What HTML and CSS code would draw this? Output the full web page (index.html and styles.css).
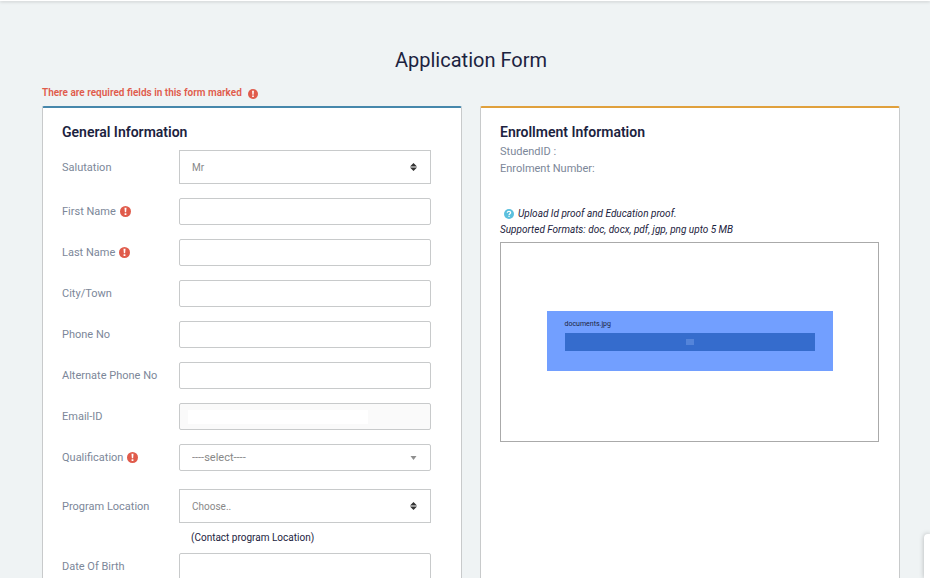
FILE: index.html
```html
<!DOCTYPE html>
<html lang="en">
<head>
  <meta charset="UTF-8">
  <meta name="viewport" content="width=device-width, initial-scale=1.0">
  <title>Application Form</title>
  <link rel="stylesheet" href="styles.css">
</head>
<body>
<svg class="sprite" aria-hidden="true">
  <symbol id="icon-required" viewBox="0 0 12 12">
    <circle cx="6" cy="6" r="6" fill="#e05b4b"/>
    <path d="M4.900 2h2.200l-.4 4.900H5.300z M5 7.800h2v1.900H5z" fill="#fff"/>
  </symbol>
  <symbol id="icon-help" viewBox="0 0 12 12">
    <circle cx="6" cy="6" r="6" fill="#5bc0de"/>
    <path d="M4 4.600C4 3.300 4.900 2.700 6 2.700s2 .7 2 1.700c0 1.300-1.800 1.400-1.900 2.900" fill="none" stroke="#fff" stroke-width="1.500"/>
    <path d="M5.300 8.200h1.500v1.500H5.300z" fill="#fff"/>
  </symbol>
  <symbol id="icon-sort" viewBox="0 0 7 8">
    <path d="M3.500 0L7 3.500H0z M0 4.500h7L3.500 8z" fill="#333"/>
  </symbol>
  <symbol id="icon-down" viewBox="0 0 7 8">
    <path d="M.5 2h6L3.500 6z" fill="#8f8f8f"/>
  </symbol>
</svg>

<header class="topbar"></header>

<main class="page">
  <h1>Application Form</h1>
  <p class="required-note">There are required fields in this form marked <svg class="icon-small"><use href="#icon-required"/></svg></p>

  <div class="panels">
    <form class="panel panel-general">
      <h2>General Information</h2>

      <div class="row">
        <label for="salutation">Salutation</label>
        <div class="select-box">
          <select id="salutation" class="tall"><option>Mr</option><option>Mrs</option><option>Ms</option></select>
          <svg><use href="#icon-sort"/></svg>
        </div>
      </div>
      <div class="row">
        <label for="firstName">First Name <svg class="icon"><use href="#icon-required"/></svg></label>
        <input type="text" id="firstName" required>
      </div>
      <div class="row">
        <label for="lastName">Last Name <svg class="icon"><use href="#icon-required"/></svg></label>
        <input type="text" id="lastName" required>
      </div>
      <div class="row">
        <label for="city">City/Town</label>
        <input type="text" id="city">
      </div>
      <div class="row">
        <label for="phone">Phone No</label>
        <input type="tel" id="phone">
      </div>
      <div class="row">
        <label for="altPhone">Alternate Phone No</label>
        <input type="tel" id="altPhone">
      </div>
      <div class="row">
        <label for="email">Email-ID</label>
        <input type="email" id="email" readonly>
      </div>
      <div class="row">
        <label for="qualification">Qualification <svg class="icon"><use href="#icon-required"/></svg></label>
        <div class="select-box">
          <select id="qualification" required><option>----select----</option></select>
          <svg><use href="#icon-down"/></svg>
        </div>
      </div>
      <div class="row row-location">
        <label for="location">Program Location</label>
        <div class="select-box">
          <select id="location" class="tall"><option>Choose..</option></select>
          <svg><use href="#icon-sort"/></svg>
        </div>
        <p class="hint">(Contact program Location)</p>
      </div>
      <div class="row">
        <label for="dob">Date Of Birth</label>
        <input type="text" id="dob">
      </div>
    </form>

    <section class="panel panel-enrollment">
      <h2>Enrollment Information</h2>
      <p class="info">StudendID :</p>
      <p class="info">Enrolment Number:</p>

      <div class="upload-help">
        <p><svg class="icon-small"><use href="#icon-help"/></svg>Upload Id proof and Education proof.</p>
        <p>Supported Formats: doc, docx, pdf, jgp, png upto 5 MB</p>
      </div>
      <div class="dropzone">
        <div class="file">
          <span class="file-name">documents.jpg</span>
          <div class="file-bar"><span></span></div>
        </div>
      </div>
    </section>
  </div>
</main>

<aside class="side-tab"></aside>
</body>
</html>
```

FILE: styles.css
```css
* { box-sizing: border-box; }
body {
  margin: 0;
  background: #eff3f4;
  color: #1c2340;
  font-family: Roboto, Arial, sans-serif;
  font-size: 11px;
}
h1, h2, p { margin: 0; }
.sprite { position: absolute; width: 0; height: 0; }

.topbar {
  height: 1px;
  background: #fff;
  box-shadow: 0 1px 3px rgba(0,0,0,0.25);
}

.page { padding: 47px 30px 0 42px; }
h1 {
  font-size: 20px;
  line-height: 24px;
  font-weight: 400;
  text-align: center;
}
.required-note {
  display: flex;
  align-items: center;
  gap: 6px;
  margin: 13px 0 5px;
  color: #e05b4b;
  font-size: 10px;
  line-height: 16px;
  font-weight: 600;
}
.icon { width: 11px; height: 11px; margin-left: 4px; }
.icon-small { width: 10px; height: 10px; }
.required-note .icon-small { margin-top: 2px; }

.panels {
  display: grid;
  grid-template-columns: 1fr 1fr;
  gap: 18px;
}
.panel {
  background: #fff;
  border: 1px solid #c8cacb;
  border-top: 2px solid #4687ab;
  border-radius: 2px 2px 0 0;
  padding: 14px 30px 20px 19px;
}
.panel-enrollment {
  border-top-color: #e0a03c;
  padding-right: 20px;
}
h2 {
  font-size: 14px;
  line-height: 20px;
  font-weight: 600;
}
.panel-general h2 { margin-bottom: 8px; }
.panel-enrollment h2 { margin-bottom: 1px; }

.row {
  display: grid;
  grid-template-columns: 117px 1fr;
  align-items: center;
  margin-bottom: 14px;
}
.row label {
  display: flex;
  align-items: center;
  color: #7c8799;
}
input, select {
  display: block;
  width: 100%;
  height: 27px;
  padding: 0 12px;
  border: 1px solid #c8cacb;
  border-radius: 2px;
  background: #fff;
  color: #888;
  font: inherit;
  appearance: none;
}
.tall { height: 34px; border-radius: 0; font-size: 10px; }
input:read-only {
  background: #fafafa linear-gradient(#fff, #fff) 8px 6px / 180px 14px no-repeat;
}
.select-box { position: relative; }
.select-box svg {
  position: absolute;
  top: calc(50% - 4px);
  right: 14px;
  width: 7px;
  height: 8px;
  pointer-events: none;
}
.row-location { margin: 18px 0 8px; }
.hint {
  grid-column: 2;
  margin-top: 8px;
  padding-left: 12px;
  font-size: 10px;
  line-height: 14px;
}

.info {
  color: #7c8799;
  line-height: 17px;
}
.upload-help {
  margin: 29px 0 4px;
  font-size: 10px;
  font-style: italic;
  line-height: 16px;
}
.upload-help .icon-small {
  margin: 0 4px;
  vertical-align: -2px;
}
.dropzone {
  display: flex;
  justify-content: center;
  align-items: center;
  height: 200px;
  padding-bottom: 3px;
  border: 1px solid #aaa;
}
.file {
  width: 286px;
  height: 60px;
  padding: 8px 18px;
  background: #729fff;
}
.file-name {
  display: block;
  font-size: 7px;
  line-height: 10px;
  margin-bottom: 4px;
}
.file-bar {
  display: flex;
  justify-content: center;
  align-items: center;
  height: 18px;
  background: #356ccd;
}
.file-bar span { width: 8px; height: 6px; background: #5484da; }

.side-tab {
  position: fixed;
  right: 0;
  bottom: 0;
  width: 6px;
  height: 44px;
  background: #fff;
  border-radius: 4px 0 0 0;
  box-shadow: 0 0 5px rgba(0,0,0,0.25);
}
```
